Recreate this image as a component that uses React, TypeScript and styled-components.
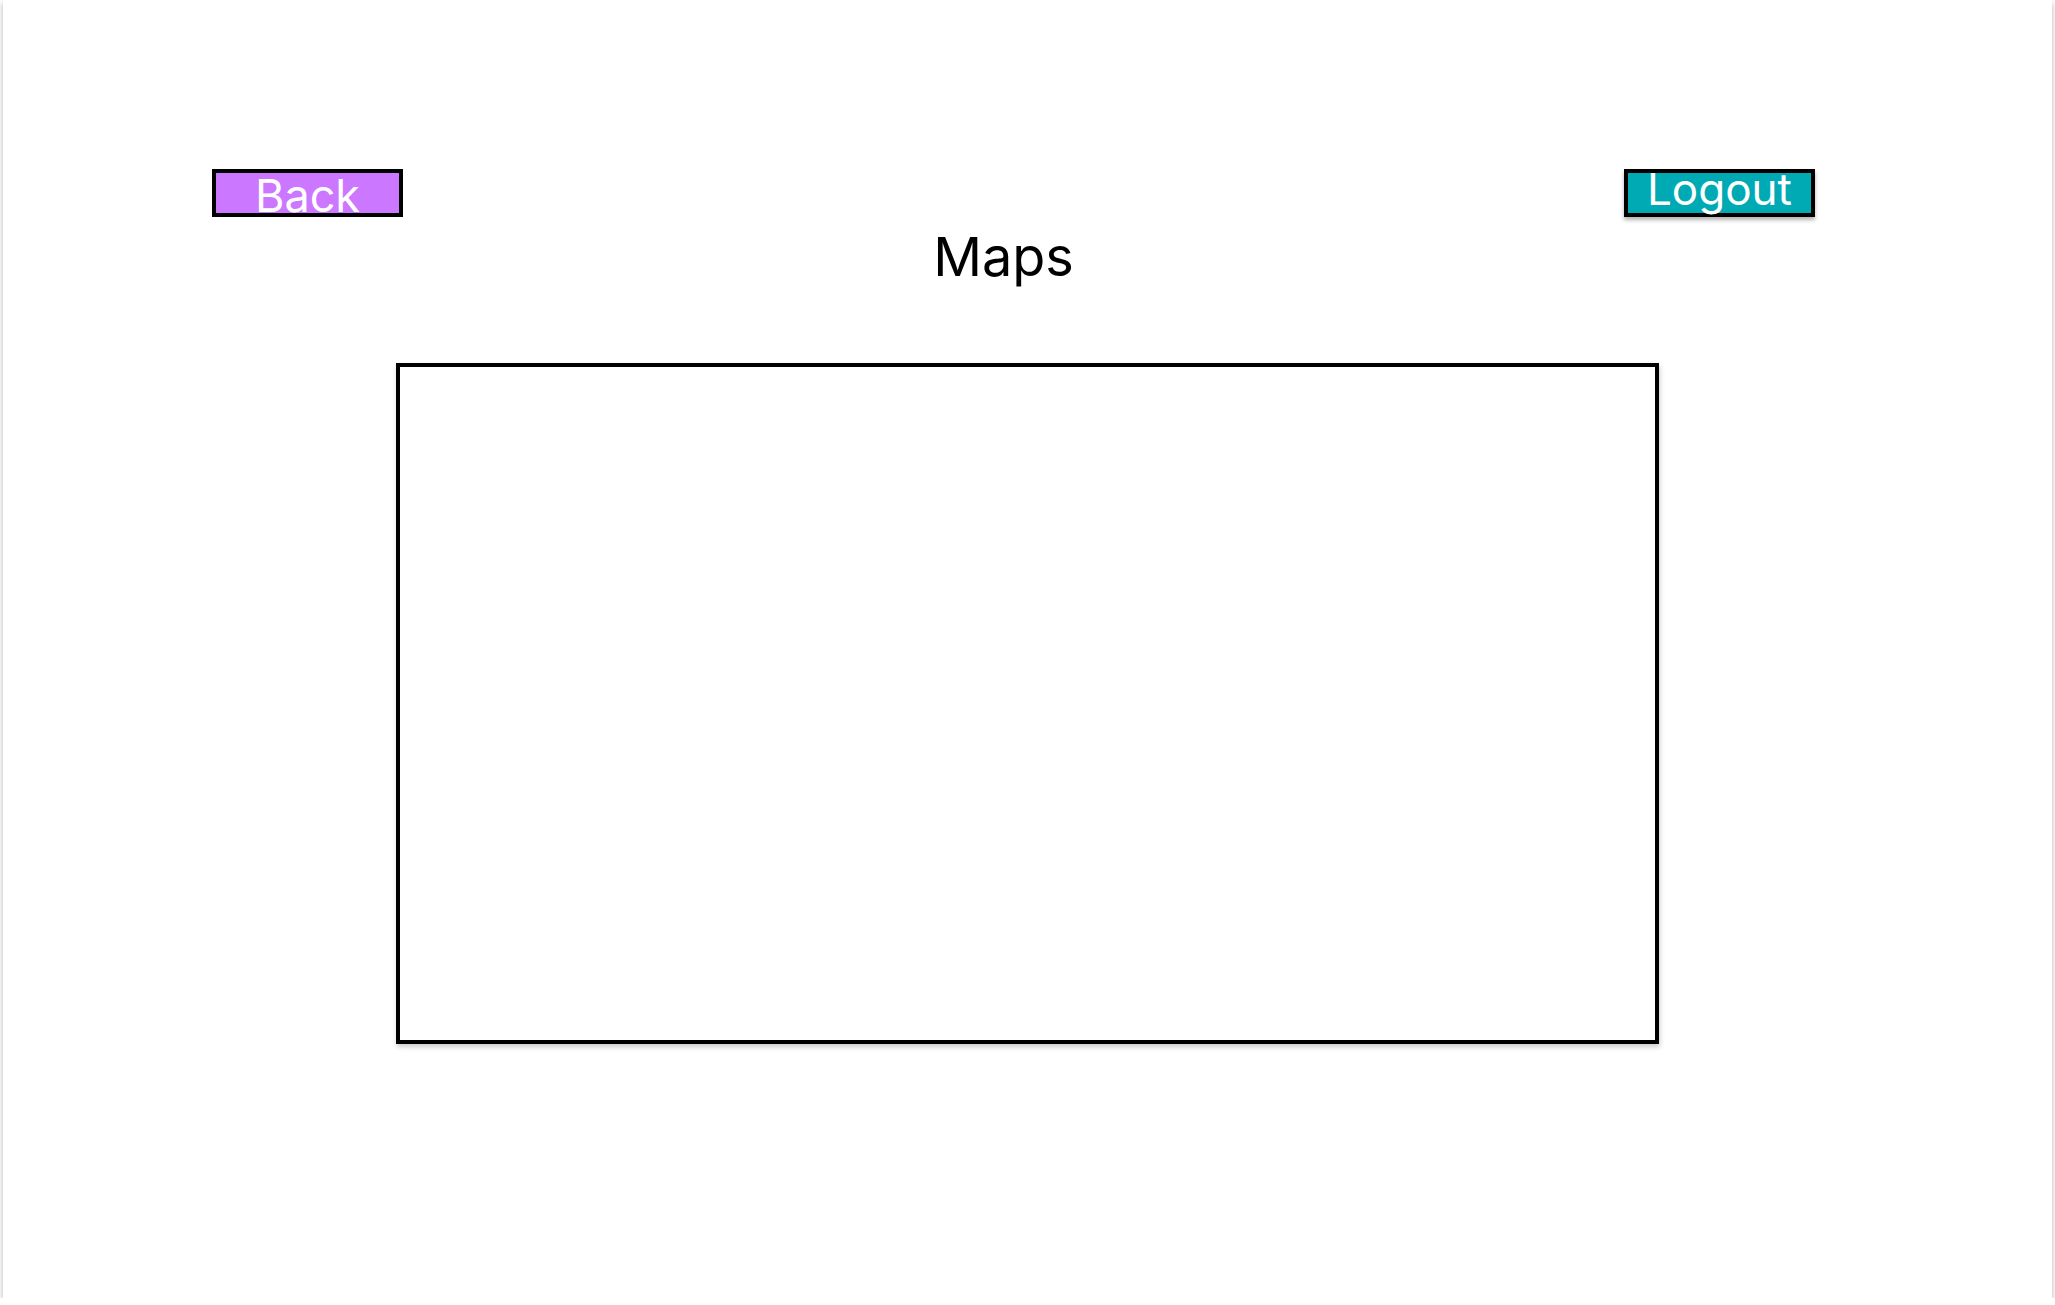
import styled, { createGlobalStyle } from "styled-components";

const GlobalStyle = createGlobalStyle`
  html, body {
    margin: 0;
    padding: 0;
    background: #ffffff;
    font-family: Inter, "Noto Sans", sans-serif;
  }
`;

const Page = styled.div`
  width: 2049px;
  height: 1298px;
  margin-left: 3px;
  background: #ffffff;
  box-shadow: 0 3px 6px rgba(0, 0, 0, 0.3);
  display: flex;
  flex-direction: column;
  align-items: center;
`;

const TopBar = styled.div`
  width: 100%;
  box-sizing: border-box;
  display: flex;
  justify-content: space-between;
  padding: 169px 237px 0 209px;
`;

const NavButton = styled.button<{ $bg: string; $size: number; $lh: number; $shadow?: boolean }>`
  width: 191px;
  height: 48px;
  box-sizing: border-box;
  border: 4px solid #000000;
  border-radius: 0;
  padding: 0;
  background: ${({ $bg }) => $bg};
  color: #ffffff;
  font-family: Inter, "Noto Sans", sans-serif;
  font-size: ${({ $size }) => $size}px;
  line-height: ${({ $lh }) => $lh}px;
  display: flex;
  justify-content: center;
  align-items: flex-start;
  cursor: pointer;
  box-shadow: ${({ $shadow }) => ($shadow ? "0 3px 4px rgba(0, 0, 0, 0.3)" : "none")};
`;

const Title = styled.h1`
  margin: 7px 0 0;
  padding-right: 48px;
  font-size: 54px;
  font-weight: 400;
  line-height: normal;
  color: #000000;
`;

const MapFrame = styled.div`
  margin-top: 74px;
  width: 1263px;
  height: 681px;
  box-sizing: border-box;
  border: 4px solid #000000;
  background: #ffffff;
  box-shadow: 1px 3px 5px rgba(0, 0, 0, 0.2);
`;

const App = () => {
  return (
    <>
      <GlobalStyle />
      <Page>
        <TopBar>
          <NavButton $bg="#cc77ff" $size={45} $lh={45}>
            Back
          </NavButton>
          <NavButton $bg="#00aab4" $size={44} $lh={32} $shadow>
            Logout
          </NavButton>
        </TopBar>
        <Title>Maps</Title>
        <MapFrame />
      </Page>
    </>
  );
};

export default App;
